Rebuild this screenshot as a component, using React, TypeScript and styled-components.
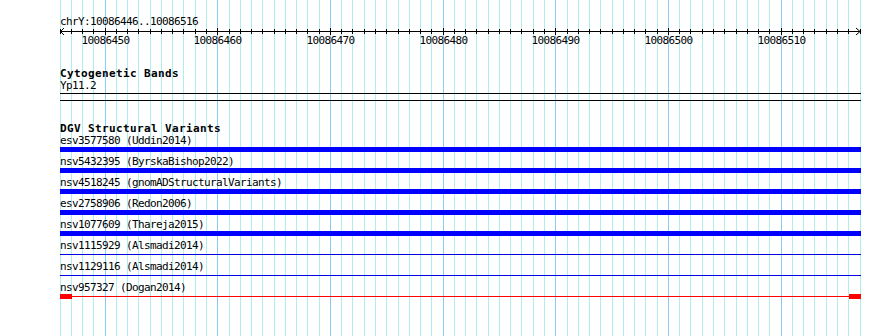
import React from "react";
import styled, { createGlobalStyle } from "styled-components";

const GlobalStyle = createGlobalStyle`
  html, body { margin: 0; padding: 0; background: #ffffff; }
  body { font-family: "DejaVu Sans Mono", "Liberation Mono", monospace; color: #000; }
`;

const START = 10086446;
const END = 10086516;
const SPAN = END - START + 1; // 71 bp
const WIDTH = 800;
const PANEL_H = 336;
const px = (i: number) => Math.floor((i * WIDTH) / SPAN) + 0.5;

const Page = styled.div`
  width: 890px;
  height: 336px;
  overflow: hidden;
  padding-left: 60px;
  box-sizing: border-box;
`;

const Panel = styled.div`
  position: relative;
  width: 801px;
  height: ${PANEL_H}px;
`;

const GridSvg = styled.svg`
  position: absolute;
  left: 0;
  top: 0;
  z-index: 0;
`;

const Content = styled.div`
  position: relative;
  z-index: 1;
  display: flex;
  flex-direction: column;
`;

const RulerSvg = styled.svg`
  display: block;
  text {
    font-family: "DejaVu Sans Mono", "Liberation Mono", monospace;
    font-size: 11px;
    letter-spacing: -0.622px;
    fill: #000;
  }
`;

const Track = styled.section<{ $top: number }>`
  display: flex;
  flex-direction: column;
  margin-top: ${(p) => p.$top}px;
`;

const TrackTitle = styled.div`
  font-family: "DejaVu Sans Mono", "Liberation Mono", monospace;
  font-weight: bold;
  font-size: 11px;
  letter-spacing: 0.378px;
  line-height: 14px;
  height: 12px;
  white-space: nowrap;
`;

const Label = styled.div`
  font-family: "DejaVu Sans Mono", "Liberation Mono", monospace;
  font-size: 11px;
  letter-spacing: -0.622px;
  line-height: 14px;
  height: 12px;
  white-space: nowrap;
`;

const Band = styled.div`
  margin-top: 2px;
  height: 6px;
  border-top: 1px solid #000;
  border-bottom: 1px solid #000;
  width: 801px;
`;

const Row = styled.div`
  display: flex;
  flex-direction: column;
  height: 21px;
`;

const Glyph = styled.div`
  margin-top: 1px;
  height: 5px;
  display: flex;
  align-items: center;
  width: 801px;
`;

const Bar = styled.div<{ $color: string }>`
  flex: 1;
  height: 5px;
  background: ${(p) => p.$color};
`;

const Line = styled.div<{ $color: string }>`
  flex: 1;
  height: 1px;
  background: ${(p) => p.$color};
`;

const EndBox = styled.div<{ $color: string }>`
  width: 12px;
  height: 5px;
  background: ${(p) => p.$color};
`;

type Variant = { id: string; study: string; kind: "bar" | "line" | "ends" };

const variants: Variant[] = [
  { id: "esv3577580", study: "Uddin2014", kind: "bar" },
  { id: "nsv5432395", study: "ByrskaBishop2022", kind: "bar" },
  { id: "nsv4518245", study: "gnomADStructuralVariants", kind: "bar" },
  { id: "esv2758906", study: "Redon2006", kind: "bar" },
  { id: "nsv1077609", study: "Thareja2015", kind: "bar" },
  { id: "nsv1115929", study: "Alsmadi2014", kind: "line" },
  { id: "nsv1129116", study: "Alsmadi2014", kind: "line" },
  { id: "nsv957327", study: "Dogan2014", kind: "ends" },
];

function Grid() {
  const lines = [];
  for (let i = 0; i <= SPAN; i++) {
    const major = (START + i) % 10 === 0;
    lines.push(
      <line
        key={i}
        x1={px(i)}
        x2={px(i)}
        y1={0}
        y2={PANEL_H}
        stroke={major ? "#87cefa" : "#afeeee"}
        strokeWidth={1}
      />
    );
  }
  return (
    <GridSvg width={801} height={PANEL_H} shapeRendering="crispEdges">
      {lines}
    </GridSvg>
  );
}

function Ruler() {
  const ticks = [];
  const labels = [];
  for (let i = 0; i <= SPAN; i++) {
    const pos = START + i;
    const major = pos % 10 === 0;
    ticks.push(
      <line
        key={`t${i}`}
        x1={px(i)}
        x2={px(i)}
        y1={major ? 28 : 29}
        y2={major ? 35 : 34}
        stroke="#000"
      />
    );
    if (major) {
      labels.push(
        <text key={`l${i}`} x={px(i)} y={44} textAnchor="middle">
          {pos}
        </text>
      );
    }
  }
  return (
    <RulerSvg width={801} height={50}>
      <text x={0} y={25}>{`chrY:${START}..${END}`}</text>
      <g shapeRendering="crispEdges">
        <line x1={0} x2={800} y1={31.5} y2={31.5} stroke="#000" />
        {ticks}
      </g>
      <polyline points="4,28 0.5,31.5 4,35" fill="none" stroke="#000" />
      <polyline points="796,28 800,31.5 796,35" fill="none" stroke="#000" />
      {labels}
    </RulerSvg>
  );
}

function VariantGlyph({ kind }: { kind: Variant["kind"] }) {
  if (kind === "bar") {
    return (
      <Glyph>
        <Bar $color="#0000ff" />
      </Glyph>
    );
  }
  if (kind === "line") {
    return (
      <Glyph>
        <Line $color="#0000e0" />
      </Glyph>
    );
  }
  return (
    <Glyph>
      <EndBox $color="#ff0000" />
      <Line $color="#ff0000" />
      <EndBox $color="#ff0000" />
    </Glyph>
  );
}

export default function App() {
  return (
    <Page>
      <GlobalStyle />
      <Panel>
        <Grid />
        <Content>
          <Ruler />
          <Track $top={17}>
            <TrackTitle>Cytogenetic Bands</TrackTitle>
            <Label>Yp11.2</Label>
            <Band />
          </Track>
          <Track $top={21}>
            <TrackTitle>DGV Structural Variants</TrackTitle>
            {variants.map((v) => (
              <Row key={v.id}>
                <Label>{`${v.id} (${v.study})`}</Label>
                <VariantGlyph kind={v.kind} />
              </Row>
            ))}
          </Track>
        </Content>
      </Panel>
    </Page>
  );
}
